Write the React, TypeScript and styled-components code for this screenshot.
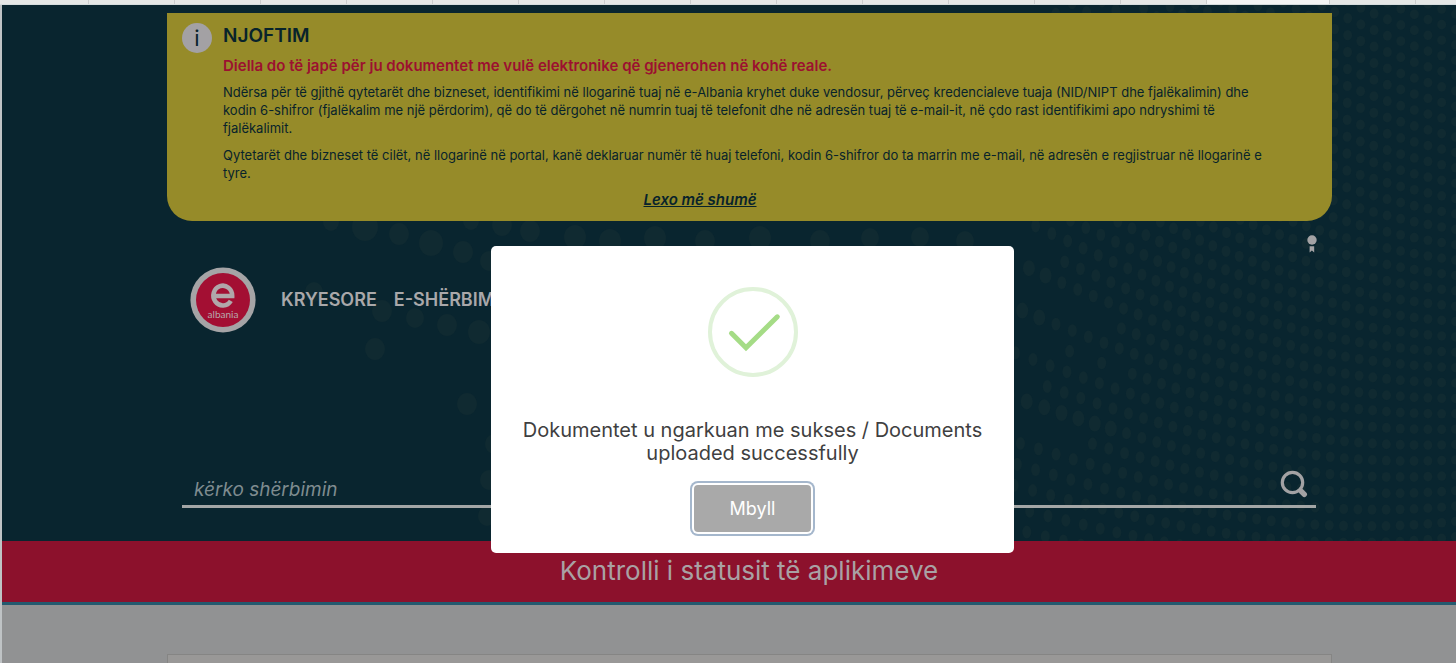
import React from "react";
import styled, { createGlobalStyle } from "styled-components";

const GlobalStyle = createGlobalStyle`
  *, *::before, *::after { box-sizing: border-box; }
  html, body, #root { height: 100%; }
  body {
    margin: 0;
    font-family: Inter, "Open Sans", "Liberation Sans", sans-serif;
    background: #919293;
  }
`;

const Shell = styled.div`
  display: flex;
  flex-direction: column;
  min-height: 100%;
  overflow: hidden;
`;

const TabStrip = styled.div`
  display: flex;
  height: 5px;
  background: #e5e7e6;
  border-bottom: 1px solid #d5dcdd;
  overflow: hidden;
`;

const TabSlot = styled.span<{ $active?: boolean; $first?: boolean }>`
  flex: 0 0 ${(p) => (p.$active ? "123px" : p.$first ? "89px" : "86px")};
  border-right: 1px solid #cbcdcd;
  background: ${(p) => (p.$active ? "#f3f4f4" : "transparent")};
`;

const Page = styled.div`
  display: flex;
  flex-direction: column;
  flex: 1;
  border-left: 2px solid #bfc3c5;
`;

const Hero = styled.header`
  position: relative;
  padding: 8px 124px 33px 165px;
  background: #09252f;
`;

const Dots = styled.svg`
  position: absolute;
  top: 0;
  right: 0;
  width: 1456px;
  height: 100%;
  fill: #102a31;
`;

const Notice = styled.section`
  position: relative;
  display: flex;
  gap: 11px;
  min-height: 208px;
  padding: 10px 60px 10px 15px;
  border-radius: 0 0 25px 25px;
  background: #968b29;
  color: #08232b;
`;

const InfoMark = styled.span`
  flex: 0 0 30px;
  height: 30px;
  border-radius: 50%;
  background: #a3a1a4;
  font-size: 22px;
  line-height: 30px;
  text-align: center;
`;

const NoticeBody = styled.div`
  flex: 1;
  font-size: 13px;
  line-height: 18px;
`;

const NoticeTitle = styled.h2`
  margin: 0 0 8px;
  font-size: 19px;
  line-height: 26px;
  font-weight: 600;
`;

const NoticeLead = styled.p`
  margin: 0 0 8px;
  color: #9c1030;
  font-size: 15px;
  font-weight: 600;
`;

const NoticeText = styled.p`
  margin: 0 0 9px;
`;

const MoreRow = styled.div`
  padding-right: 95px;
  text-align: center;
`;

const MoreLink = styled.a`
  color: inherit;
  font-size: 15px;
  font-style: italic;
  font-weight: 600;
`;

const Tools = styled.div`
  position: relative;
  display: flex;
  justify-content: flex-end;
  padding: 14px 15px 0 0;
  height: 46px;
`;

const ToolButton = styled.button`
  width: 10px;
  height: 18px;
  padding: 0;
  border: 0;
  background: none;
`;

const Nav = styled.nav`
  position: relative;
  display: flex;
  align-items: center;
  height: 66px;
  padding-left: 23px;
`;

const LogoLink = styled.a`
  width: 66px;
  height: 66px;
  margin-right: 25px;
`;

const NavLink = styled.a`
  margin-right: 17px;
  color: #a9a8aa;
  font-size: 18px;
  line-height: 22px;
  font-weight: 600;
  text-decoration: none;
  white-space: nowrap;
`;

const SearchForm = styled.form`
  position: relative;
  display: flex;
  align-items: center;
  height: 41px;
  margin: 134px 16px 0 15px;
  border-bottom: 3px solid #a3a6a6;
`;

const SearchInput = styled.input`
  flex: 1;
  min-width: 0;
  height: 38px;
  padding: 7px 12px 0;
  border: 0;
  outline: 0;
  background: none;
  color: #a3a6a6;
  font: italic 400 19px/24px Inter, "Open Sans", sans-serif;
  &::placeholder {
    color: #7f8c90;
    opacity: 1;
  }
`;

const SearchButton = styled.button`
  width: 28px;
  height: 28px;
  margin: 0 8px 4px 0;
  padding: 0;
  border: 0;
  background: none;
`;

const StatusBand = styled.section`
  height: 64px;
  padding-left: 40px;
  border-bottom: 3px solid #245a6f;
  background: #8c112c;
  text-align: center;
`;

const StatusTitle = styled.h1`
  margin: 0;
  color: #a9a1a4;
  font-size: 26px;
  line-height: 60px;
  font-weight: 400;
`;

const Content = styled.main`
  flex: 1;
  display: flex;
  padding: 49px 124px 0 165px;
  background: #919293;
`;

const Panel = styled.div`
  flex: 1;
  border: 1px solid #858584;
  border-bottom: 0;
  background: #999897;
`;

const Overlay = styled.div`
  position: fixed;
  inset: 0;
  display: flex;
  align-items: center;
  justify-content: center;
  padding: 136px 0 0 49px;
`;

const Dialog = styled.div`
  display: flex;
  flex-direction: column;
  align-items: center;
  width: 523px;
  padding: 41px 20px 21px;
  border-radius: 5px;
  background: #fff;
`;

const DialogText = styled.p`
  margin: 42px 0 20px;
  color: #3f3f41;
  font-size: 20px;
  line-height: 23px;
  text-align: center;
`;

const CloseButton = styled.button`
  width: 117px;
  height: 47px;
  padding: 0;
  border: 0;
  border-radius: 4px;
  background: #a9a9a9;
  box-shadow: 0 0 0 2px #fff, 0 0 0 4px #a5b7cc;
  color: #fff;
  font: 400 18px/24px Inter, "Open Sans", sans-serif;
`;

// Last column that is filled in each row on the ragged edge of the pattern.
const rowEnds: Record<string, number> = { "-1": 27, "1": 23, "3": 22, "5": 27, "7": 24 };
const strays = ["3:24", "3:26"];

const fieldDots: { x: number; y: number; rx: number; ry: number }[] = [];
for (let row = -30; row <= 20; row++) {
  for (let col = -1; col <= 29; col++) {
    const end = rowEnds[String(row)] ?? 29;
    if (col > end && !strays.includes(`${row}:${col}`)) continue;
    const bend = col > 20 ? 0.5 * (col - 20) ** 2 : 0;
    // Columns above the first row lean less, so that they stay clear of each other.
    const lean = row < -4 ? -4 + (row + 4) * 0.5 : row;
    const x = 1000 + (1325 - 41.3 * col - bend - 0.012 * col * col * lean) / 3;
    const y = 175 + (608 + 46.7 * row - 0.36 * col * col - 1.4 * col + 0.58 * col * row) / 3;
    if (y < -8 || y > 544 || x > 1464) continue;
    const big = (row === 0 && col > 27) || (row === 6 && col > 22) || (row === 2 && col > 27);
    fieldDots.push({ x, y, rx: big ? 6 : 4.5, ry: big ? 8 : 4.8 + col * 0.06 });
  }
}

// Large loose dots on the left side: x, y, radius.
const looseDots = [
  [331, 217, 9], [365, 222, 14], [399, 229, 11], [431, 238, 13], [463, 247, 11], [471, 216, 9],
  [502, 220, 11], [489, 256, 10], [530, 226, 11], [575, 232, 12], [610, 236, 12], [655, 233, 12],
  [705, 236, 11], [760, 233, 12], [820, 236, 11], [870, 233, 10], [920, 232, 10], [965, 236, 10],
  [314, 287, 10], [382, 306, 11], [415, 313, 10], [447, 320, 11], [479, 327, 12], [375, 344, 11],
  [467, 399, 11], [494, 439, 10], [489, 475, 10], [487, 511, 10],
];

const tabs = Array.from({ length: 18 }, (_, i) => i);

export default function App() {
  return (
    <Shell>
      <GlobalStyle />
      <TabStrip aria-hidden="true">
        {tabs.map((i) => (
          <TabSlot key={i} $first={i === 0} $active={i === 14} />
        ))}
      </TabStrip>
      <Page>
        <Hero>
          <Dots viewBox="0 0 1456 536" preserveAspectRatio="xMaxYMin slice" aria-hidden="true">
            {fieldDots.map((d, i) => (
              <ellipse key={i} cx={d.x} cy={d.y} rx={d.rx} ry={d.ry} />
            ))}
            {looseDots.map(([x, y, r]) => (
              <ellipse key={`${x}-${y}`} cx={x} cy={y} rx={r - 1} ry={r} />
            ))}
          </Dots>
          <Notice>
            <InfoMark aria-hidden="true">i</InfoMark>
            <NoticeBody>
              <NoticeTitle>NJOFTIM</NoticeTitle>
              <NoticeLead>
                Diella do të japë për ju dokumentet me vulë elektronike që gjenerohen në kohë reale.
              </NoticeLead>
              <NoticeText>
                Ndërsa për të gjithë qytetarët dhe bizneset, identifikimi në llogarinë tuaj në e-Albania kryhet duke
                vendosur, përveç kredencialeve tuaja (NID/NIPT dhe fjalëkalimin) dhe
                <br />
                kodin 6-shifror (fjalëkalim me një përdorim), që do të dërgohet në numrin tuaj të telefonit dhe në
                adresën tuaj të e-mail-it, në çdo rast identifikimi apo ndryshimi të
                <br />
                fjalëkalimit.
              </NoticeText>
              <NoticeText>
                Qytetarët dhe bizneset të cilët, në llogarinë në portal, kanë deklaruar numër të huaj telefoni, kodin
                6-shifror do ta marrin me e-mail, në adresën e regjistruar në llogarinë e
                <br />
                tyre.
              </NoticeText>
              <MoreRow>
                <MoreLink href="#njoftim">Lexo më shumë</MoreLink>
              </MoreRow>
            </NoticeBody>
          </Notice>
          <Tools>
            <ToolButton type="button" aria-label="Certifikata">
              <svg width="10" height="18" viewBox="0 0 10 18" fill="#a3a2a4">
                <circle cx="5" cy="5" r="4.7" />
                <path d="M2.6 11.3h4.6v6.2L4.9 15.6 2.6 17.5z" />
              </svg>
            </ToolButton>
          </Tools>
          <Nav>
            <LogoLink href="#kryesore" aria-label="e-Albania">
              <svg width="66" height="66" viewBox="0 0 66 66">
                <circle cx="33" cy="33" r="32.6" fill="#a5a4a6" />
                <circle cx="33" cy="33" r="27" fill="#a30f33" />
                <path
                  d="M23.5 29H42.2A9.4 9.9 0 1 0 40.8 33.8"
                  fill="none"
                  stroke="#b0a7aa"
                  strokeWidth="4.6"
                />
                <text
                  x="33"
                  y="51"
                  textAnchor="middle"
                  fontFamily="Lato, sans-serif"
                  fontSize="10"
                  fill="#b7a9ad"
                >
                  albania
                </text>
              </svg>
            </LogoLink>
            <NavLink href="#kryesore">KRYESORE</NavLink>
            <NavLink href="#e-sherbimet">E-SHËRBIMET</NavLink>
          </Nav>
          <SearchForm role="search" onSubmit={(e) => e.preventDefault()}>
            <SearchInput type="text" aria-label="kërko shërbimin" placeholder="kërko shërbimin" />
            <SearchButton type="submit" aria-label="Kërko">
              <svg width="28" height="28" viewBox="0 0 28 28" fill="none" stroke="#a3a2a4">
                <circle cx="12.5" cy="12.5" r="10.2" strokeWidth="3.2" />
                <path d="M19.5 19.5l1.5 1.5" strokeWidth="3" />
                <path d="M21.3 21.3l3 3" strokeWidth="5.4" strokeLinecap="round" />
              </svg>
            </SearchButton>
          </SearchForm>
        </Hero>
        <StatusBand>
          <StatusTitle>Kontrolli i statusit të aplikimeve</StatusTitle>
        </StatusBand>
        <Content>
          <Panel />
        </Content>
      </Page>
      <Overlay>
        <Dialog role="dialog" aria-modal="true" aria-describedby="dialog-text">
          <svg width="90" height="90" viewBox="0 0 90 90" fill="none" aria-hidden="true">
            <circle cx="45" cy="45" r="43" stroke="#e0f2d9" strokeWidth="4" />
            <path d="M23.5 46.3L38 60.8L69.3 29.8" stroke="#a5dc86" strokeWidth="5" strokeLinecap="round" />
          </svg>
          <DialogText id="dialog-text">
            Dokumentet u ngarkuan me sukses / Documents uploaded successfully
          </DialogText>
          <CloseButton type="button">Mbyll</CloseButton>
        </Dialog>
      </Overlay>
    </Shell>
  );
}
